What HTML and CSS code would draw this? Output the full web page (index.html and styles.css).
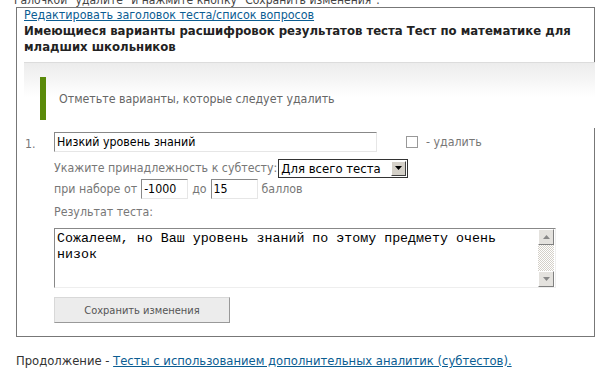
FILE: index.html
```html
<!DOCTYPE html>
<html lang="ru">
<head>
<meta charset="utf-8">
<link rel="stylesheet" href="styles.css">
</head>
<body>
<p class="intro"><span>Галочкой "удалите" и нажмите кнопку "Сохранить изменения".</span></p>
<div class="box">
  <a class="edit-link" href="#">Редактировать заголовок теста/список вопросов</a>
  <h2 class="heading">Имеющиеся варианты расшифровок результатов теста Тест по математике для младших школьников</h2>
  <div class="panel">
    <div class="notice">Отметьте варианты, которые следует удалить</div>
  </div>
  <div class="item">
    <div class="num">1.</div>
    <div class="fields">
      <div class="row first">
        <div class="input name">Низкий уровень знаний</div>
        <span class="check"></span>
        <span class="del">- удалить</span>
      </div>
      <div class="row sub">
        <span>Укажите принадлежность к субтесту:</span>
        <div class="select"><span class="sel-text">Для всего теста</span><span class="sel-btn"><svg width="7" height="4" viewBox="0 0 7 4"><path d="M0 0h7L3.5 4z" fill="#000"/></svg></span></div>
      </div>
      <div class="row range">
        <span>при наборе от</span>
        <div class="input small">-1000</div>
        <span>до</span>
        <div class="input small">15</div>
        <span>баллов</span>
      </div>
      <div class="row label">Результат теста:</div>
      <div class="textarea">
        <div class="ta-text">Сожалеем, но Ваш уровень знаний по этому предмету очень низок</div>
        <div class="scroll">
          <span class="sb-btn"><svg width="7" height="4" viewBox="0 0 7 4"><path d="M0 4h7L3.5 0z" fill="#888"/></svg></span>
          <span class="sb-track"></span>
          <span class="sb-btn"><svg width="7" height="4" viewBox="0 0 7 4"><path d="M0 0h7L3.5 4z" fill="#888"/></svg></span>
        </div>
      </div>
      <div class="button">Сохранить изменения</div>
    </div>
  </div>
</div>
<p class="footer">Продолжение - <a href="#">Тесты с использованием дополнительных аналитик (субтестов).</a></p>
</body>
</html>
```
FILE: styles.css
```css
html, body { margin: 0; padding: 0; background: #fff; }
body {
  padding-left: 16px;
  font-family: "DejaVu Sans Condensed", "DejaVu Sans", sans-serif;
  font-size: 13px;
  color: #333;
  width: 579px;
}
.intro {
  margin: 0 0 0 -2px;
  height: 7px;
  overflow: hidden;
  display: flex;
  align-items: flex-end;
  line-height: 13px;
  color: #444;
  font-size: 12px;
}
.intro span { white-space: nowrap; }
.box {
  border: 1px solid #777;
  padding: 0 4px 13px 7px;
  width: 566px;
}
.edit-link {
  display: block;
  color: #0b5d92;
  font-size: 12.4px;
  line-height: 14px;
}
.heading {
  margin: 1px 0 0;
  font-size: 13px;
  font-weight: bold;
  color: #222;
  line-height: 16px;
}
.panel {
  margin-top: 7px;
  border-top: 1px solid #dcdcdc;
  background: linear-gradient(#ececec, #ffffff 34px);
  padding: 14px 0 8px 16px;
  width: 566px;
}
.notice {
  border-left: 6px solid #5a8a0a;
  height: 43px;
  display: flex;
  align-items: center;
  padding-left: 13px;
  color: #666;
  font-size: 12.3px;
}
.item {
  display: flex;
  margin-top: 4px;
  color: #777;
}
.num {
  width: 29px;
  padding-left: 1px;
  line-height: 20px;
  padding-top: 2px;
  font-size: 12.3px;
  color: #777;
}
.fields { display: flex; flex-direction: column; }
.row {
  display: flex;
  align-items: center;
  gap: 4px;
  font-size: 12.3px;
  color: #777;
}
.row.first { height: 20px; margin-bottom: 6px; gap: 0; }
.row.sub { height: 20px; gap: 1px; }
.row.range { height: 22px; }
.row.label { height: 24px; }
.input {
  border: 1px solid #e6e6e6;
  border-top-color: #888;
  border-left-color: #888;
  height: 18px;
  line-height: 18px;
  padding-left: 2px;
  color: #000;
  font-size: 12.3px;
  box-sizing: content-box;
}
.input.name { width: 319px; }
.input.small { width: 43px; }
.check {
  width: 10px;
  height: 10px;
  border: 1px solid #999;
  margin-left: 29px;
  margin-right: 8px;
}
.del { color: #777; }
.select {
  display: flex;
  border: 1px solid #333;
  height: 17px;
  background: #fff;
}
.sel-text {
  color: #000;
  font-size: 13px;
  line-height: 17px;
  padding: 0 2px;
  width: 107px;
}
.sel-btn {
  width: 15px;
  height: 15px;
  margin: 1px;
  background: #d4d0c8;
  border: 1px solid;
  border-color: #fff #404040 #404040 #fff;
  box-sizing: border-box;
  display: flex;
  align-items: center;
  justify-content: center;
}
.textarea {
  display: flex;
  margin-top: 4px;
  width: 500px;
  height: 58px;
  border: 1px solid #eee;
  border-top-color: #888;
  border-left-color: #888;
}
.ta-text {
  flex: 1;
  font-family: "Liberation Mono", monospace;
  font-size: 13.3px;
  line-height: 16px;
  color: #000;
  padding: 2px 2px 0;
}
.scroll {
  width: 16px;
  margin: 0 1px;
  display: flex;
  flex-direction: column;
  background: repeating-conic-gradient(#d4d0c8 0 25%, #fff 0 50%) 0 0 / 2px 2px;
}
.sb-btn {
  height: 16px;
  background: #e4e2de;
  border: 1px solid;
  border-color: #fff #808080 #808080 #fff;
  box-sizing: border-box;
  display: flex;
  align-items: center;
  justify-content: center;
}
.sb-track { flex: 1; }
.button {
  margin-top: 9px;
  width: 174px;
  height: 24px;
  border: 1px solid;
  border-color: #d8d8d8 #999 #999 #d8d8d8;
  background: #ececec;
  color: #555;
  font-size: 11px;
  display: flex;
  align-items: center;
  justify-content: center;
}
.footer {
  margin: 16px 0 0;
  font-size: 12.9px;
  line-height: 15px;
  color: #333;
}
.footer a { color: #0b5d92; }
```
